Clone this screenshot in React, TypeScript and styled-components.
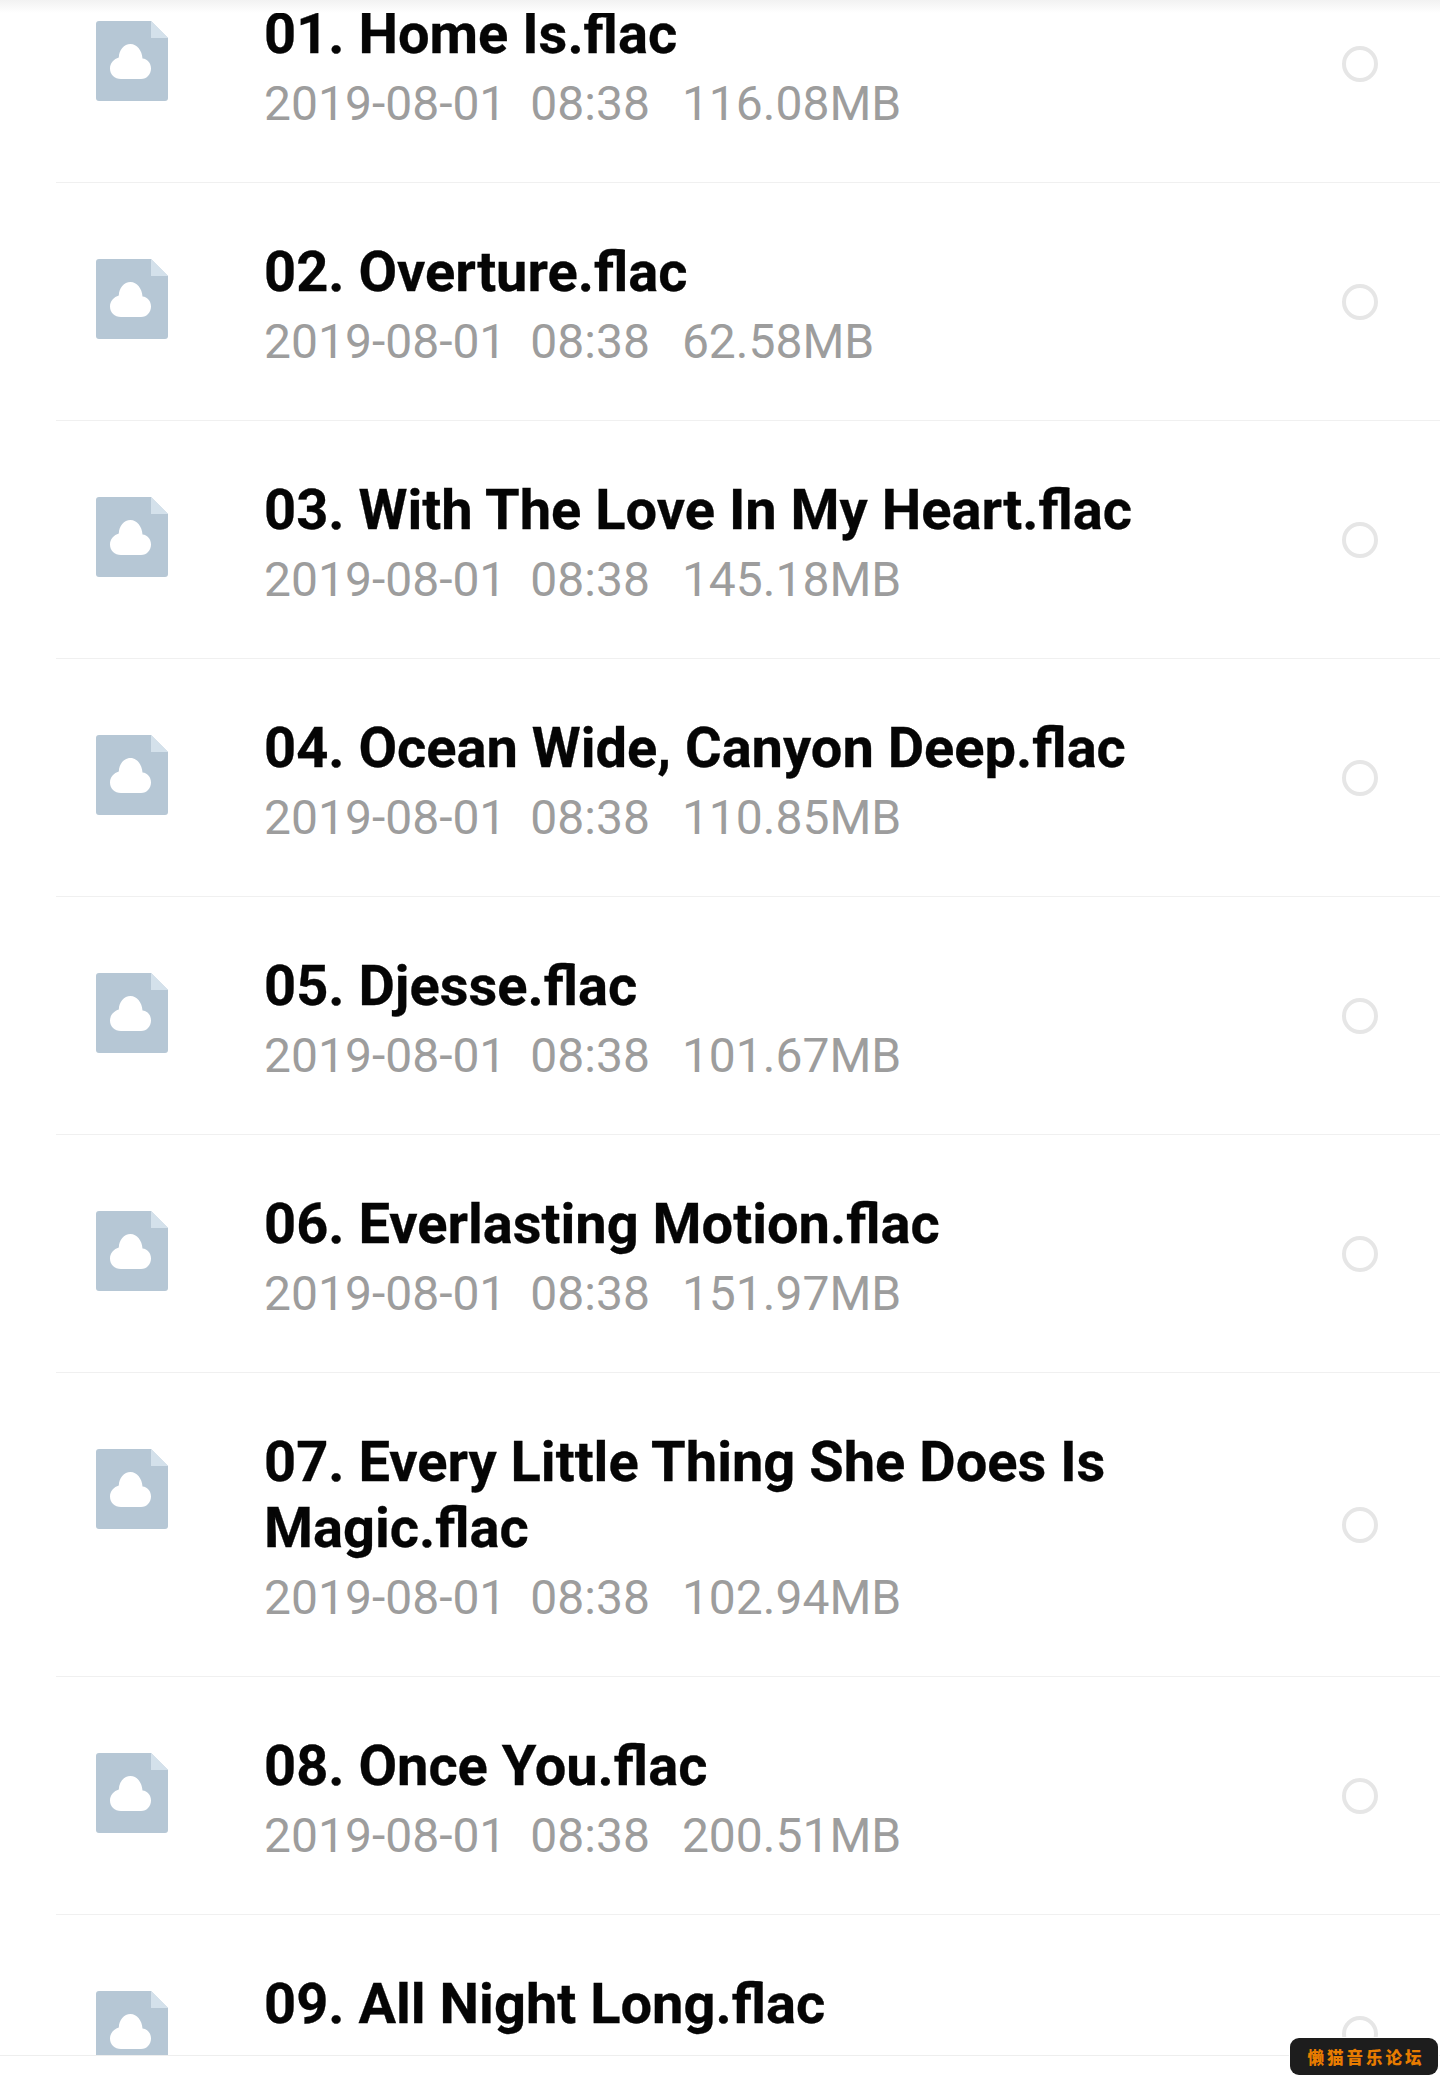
import React from "react";
import styled, { createGlobalStyle } from "styled-components";

const Global = createGlobalStyle`
  html, body { margin: 0; padding: 0; background: #fff; }
`;

const Screen = styled.div`
  position: relative;
  width: 1440px;
  height: 2076px;
  overflow: hidden;
  background: #fff;
  font-family: Roboto, "Liberation Sans", sans-serif;
`;

const List = styled.div`
  margin-top: -55px;
`;

const Row = styled.div`
  display: flex;
  align-items: center;
  margin-left: 56px;
  padding: 0 62px 0 40px;
  border-bottom: 1px solid #f0f0f0;
`;

const FileIcon = styled.svg`
  flex: none;
  align-self: flex-start;
  width: 72px;
  height: 80px;
  margin-top: 76px;
`;

const Info = styled.div`
  flex: 1;
  margin-left: 96px;
  padding: 56px 160px 43px 0;
  min-width: 0;
`;

const Title = styled.div`
  font-size: 56px;
  line-height: 66px;
  font-weight: 700;
  color: #050505;
  -webkit-text-stroke: 0.3px #050505;
`;

const Meta = styled.div`
  display: flex;
  margin-top: 2px;
  font-size: 48px;
  line-height: 70px;
  color: #9d9d9d;
`;

const Date = styled.span`
  margin-right: 24px;
`;

const Time = styled.span`
  margin-right: 32px;
`;

const Radio = styled.div`
  flex: none;
  box-sizing: border-box;
  width: 36px;
  height: 36px;
  border: 4px solid #e6e6e6;
  border-radius: 50%;
`;

const TopShade = styled.div`
  position: absolute;
  top: 0;
  left: 0;
  right: 0;
  height: 13px;
  background: linear-gradient(#f2f2f2, #fff);
`;

const BottomStrip = styled.div`
  position: absolute;
  left: 0;
  right: 0;
  bottom: 0;
  height: 20px;
  background: #fff;
  border-top: 1px solid #eeeeee;
`;

const Watermark = styled.div`
  position: absolute;
  right: 2px;
  bottom: 1px;
  box-sizing: border-box;
  width: 148px;
  height: 37px;
  padding-left: 4px;
  display: flex;
  align-items: center;
  justify-content: center;
  border-radius: 9px;
  background: #1d1d1d;
  color: #e87c00;
  font-family: "Noto Sans CJK SC", sans-serif;
  font-size: 16.5px;
  font-weight: 900;
  letter-spacing: 3px;
  box-shadow: 0 0 0 1px #fff;
`;

const files = [
  { title: "01. Home Is.flac", size: "116.08MB" },
  { title: "02. Overture.flac", size: "62.58MB" },
  { title: "03. With The Love In My Heart.flac", size: "145.18MB" },
  { title: "04. Ocean Wide, Canyon Deep.flac", size: "110.85MB" },
  { title: "05. Djesse.flac", size: "101.67MB" },
  { title: "06. Everlasting Motion.flac", size: "151.97MB" },
  { title: "07. Every Little Thing She Does Is Magic.flac", size: "102.94MB" },
  { title: "08. Once You.flac", size: "200.51MB" },
  { title: "09. All Night Long.flac", size: "147.07MB" },
];

const CloudFile = () => (
  <FileIcon viewBox="0 0 72 80">
    <path d="M3 0H55L72 17V77a3 3 0 0 1-3 3H3a3 3 0 0 1-3-3V3a3 3 0 0 1 3-3Z" fill="#b6c7d5" />
    <path d="M55 0L72 17H55Z" fill="#d4e1eb" />
    <path d="M25 58H45C51 58 55 53 55 47.5C55 42 51.500 38 46.500 37.500C46 29.500 41 23 34.500 23C28 23 23 29 22.800 36.500C18 38 14 42 14 47.500C14 53.500 18.500 58 25 58Z" fill="#fff" />
  </FileIcon>
);

export default function App() {
  return (
    <Screen>
      <Global />
      <List>
        {files.map((f) => (
          <Row key={f.title}>
            <CloudFile />
            <Info>
              <Title>{f.title}</Title>
              <Meta>
                <Date>2019-08-01</Date>
                <Time>08:38</Time>
                <span>{f.size}</span>
              </Meta>
            </Info>
            <Radio />
          </Row>
        ))}
      </List>
      <TopShade />
      <BottomStrip />
      <Watermark>懒猫音乐论坛</Watermark>
    </Screen>
  );
}
